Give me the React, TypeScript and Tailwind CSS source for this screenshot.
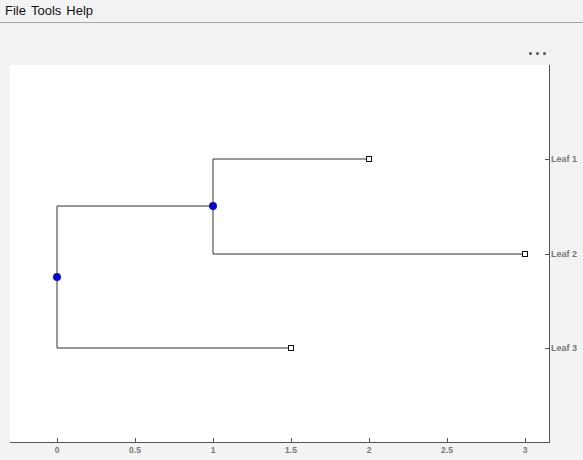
import React from 'react';

const X0 = 57;
const UNIT = 156;
const px = (v: number) => X0 + v * UNIT;

const xTicks = [0, 0.5, 1, 1.5, 2, 2.5, 3];
const leaves = [
  { name: 'Leaf 1', y: 94, x: 2 },
  { name: 'Leaf 2', y: 189, x: 3 },
  { name: 'Leaf 3', y: 283, x: 1.5 },
];

const Dendrogram: React.FC = () => {
  const line = '#333';
  return (
    <svg width={583} height={395} className="block" style={{ fontFamily: '"Liberation Sans", Arial, sans-serif' }}>
      <rect x={10} y={0} width={539} height={377} fill="#ffffff" />

      {/* tree */}
      <g stroke={line} strokeWidth={1} fill="none">
        <path d={`M${px(0)} 141 V283 H${px(1.5)}`} />
        <path d={`M${px(0)} 141 H${px(1)}`} />
        <path d={`M${px(1)} 94 V189`} />
        <path d={`M${px(1)} 94 H${px(2)}`} />
        <path d={`M${px(1)} 189 H${px(3)}`} />
      </g>
      {leaves.map((l) => (
        <rect key={l.name} x={px(l.x) - 2.5} y={l.y - 2.5} width={5} height={5} fill="#fff" stroke="#111" strokeWidth={1} />
      ))}
      <circle cx={px(0)} cy={212} r={3.8} fill="#0000e6" stroke="#1a1a40" strokeWidth={0.6} />
      <circle cx={px(1)} cy={141} r={3.8} fill="#0000e6" stroke="#1a1a40" strokeWidth={0.6} />

      {/* axes */}
      <g stroke="#555" strokeWidth={1} shapeRendering="crispEdges">
        <line x1={10} y1={377.5} x2={549} y2={377.5} />
        <line x1={549.5} y1={0} x2={549.5} y2={378} />
        {xTicks.map((t) => (
          <line key={t} x1={Math.round(px(t)) + 0.5} y1={373} x2={Math.round(px(t)) + 0.5} y2={377} />
        ))}
        {leaves.map((l) => (
          <line key={l.name} x1={545} y1={l.y + 0.5} x2={549} y2={l.y + 0.5} />
        ))}
      </g>
      {xTicks.map((t) => (
        <text key={t} x={px(t)} y={388} textAnchor="middle" fontSize={8.5} fontWeight="bold" fill="#777">
          {t}
        </text>
      ))}
      {leaves.map((l) => (
        <text key={l.name} x={551} y={l.y + 3} fontSize={9} fontWeight="bold" fill="#777">
          {l.name}
        </text>
      ))}
    </svg>
  );
};

export default function App() {
  return (
    <div className="w-[583px] h-[460px] overflow-hidden bg-[#f3f3f3] font-['Liberation_Sans',Arial,sans-serif]">
      <div className="h-[23px] flex items-center gap-[5px] px-[5px] border-b border-[#a6a6a6] text-[13px] text-[#111]">
        <span>File</span>
        <span>Tools</span>
        <span>Help</span>
      </div>
      <div className="h-[42px] flex items-center justify-end pr-[37px] pt-[18px] gap-[4px]">
        <div className="w-[3px] h-[3px] rounded-full bg-[#555]" />
        <div className="w-[3px] h-[3px] rounded-full bg-[#555]" />
        <div className="w-[3px] h-[3px] rounded-full bg-[#555]" />
      </div>
      <Dendrogram />
    </div>
  );
}
